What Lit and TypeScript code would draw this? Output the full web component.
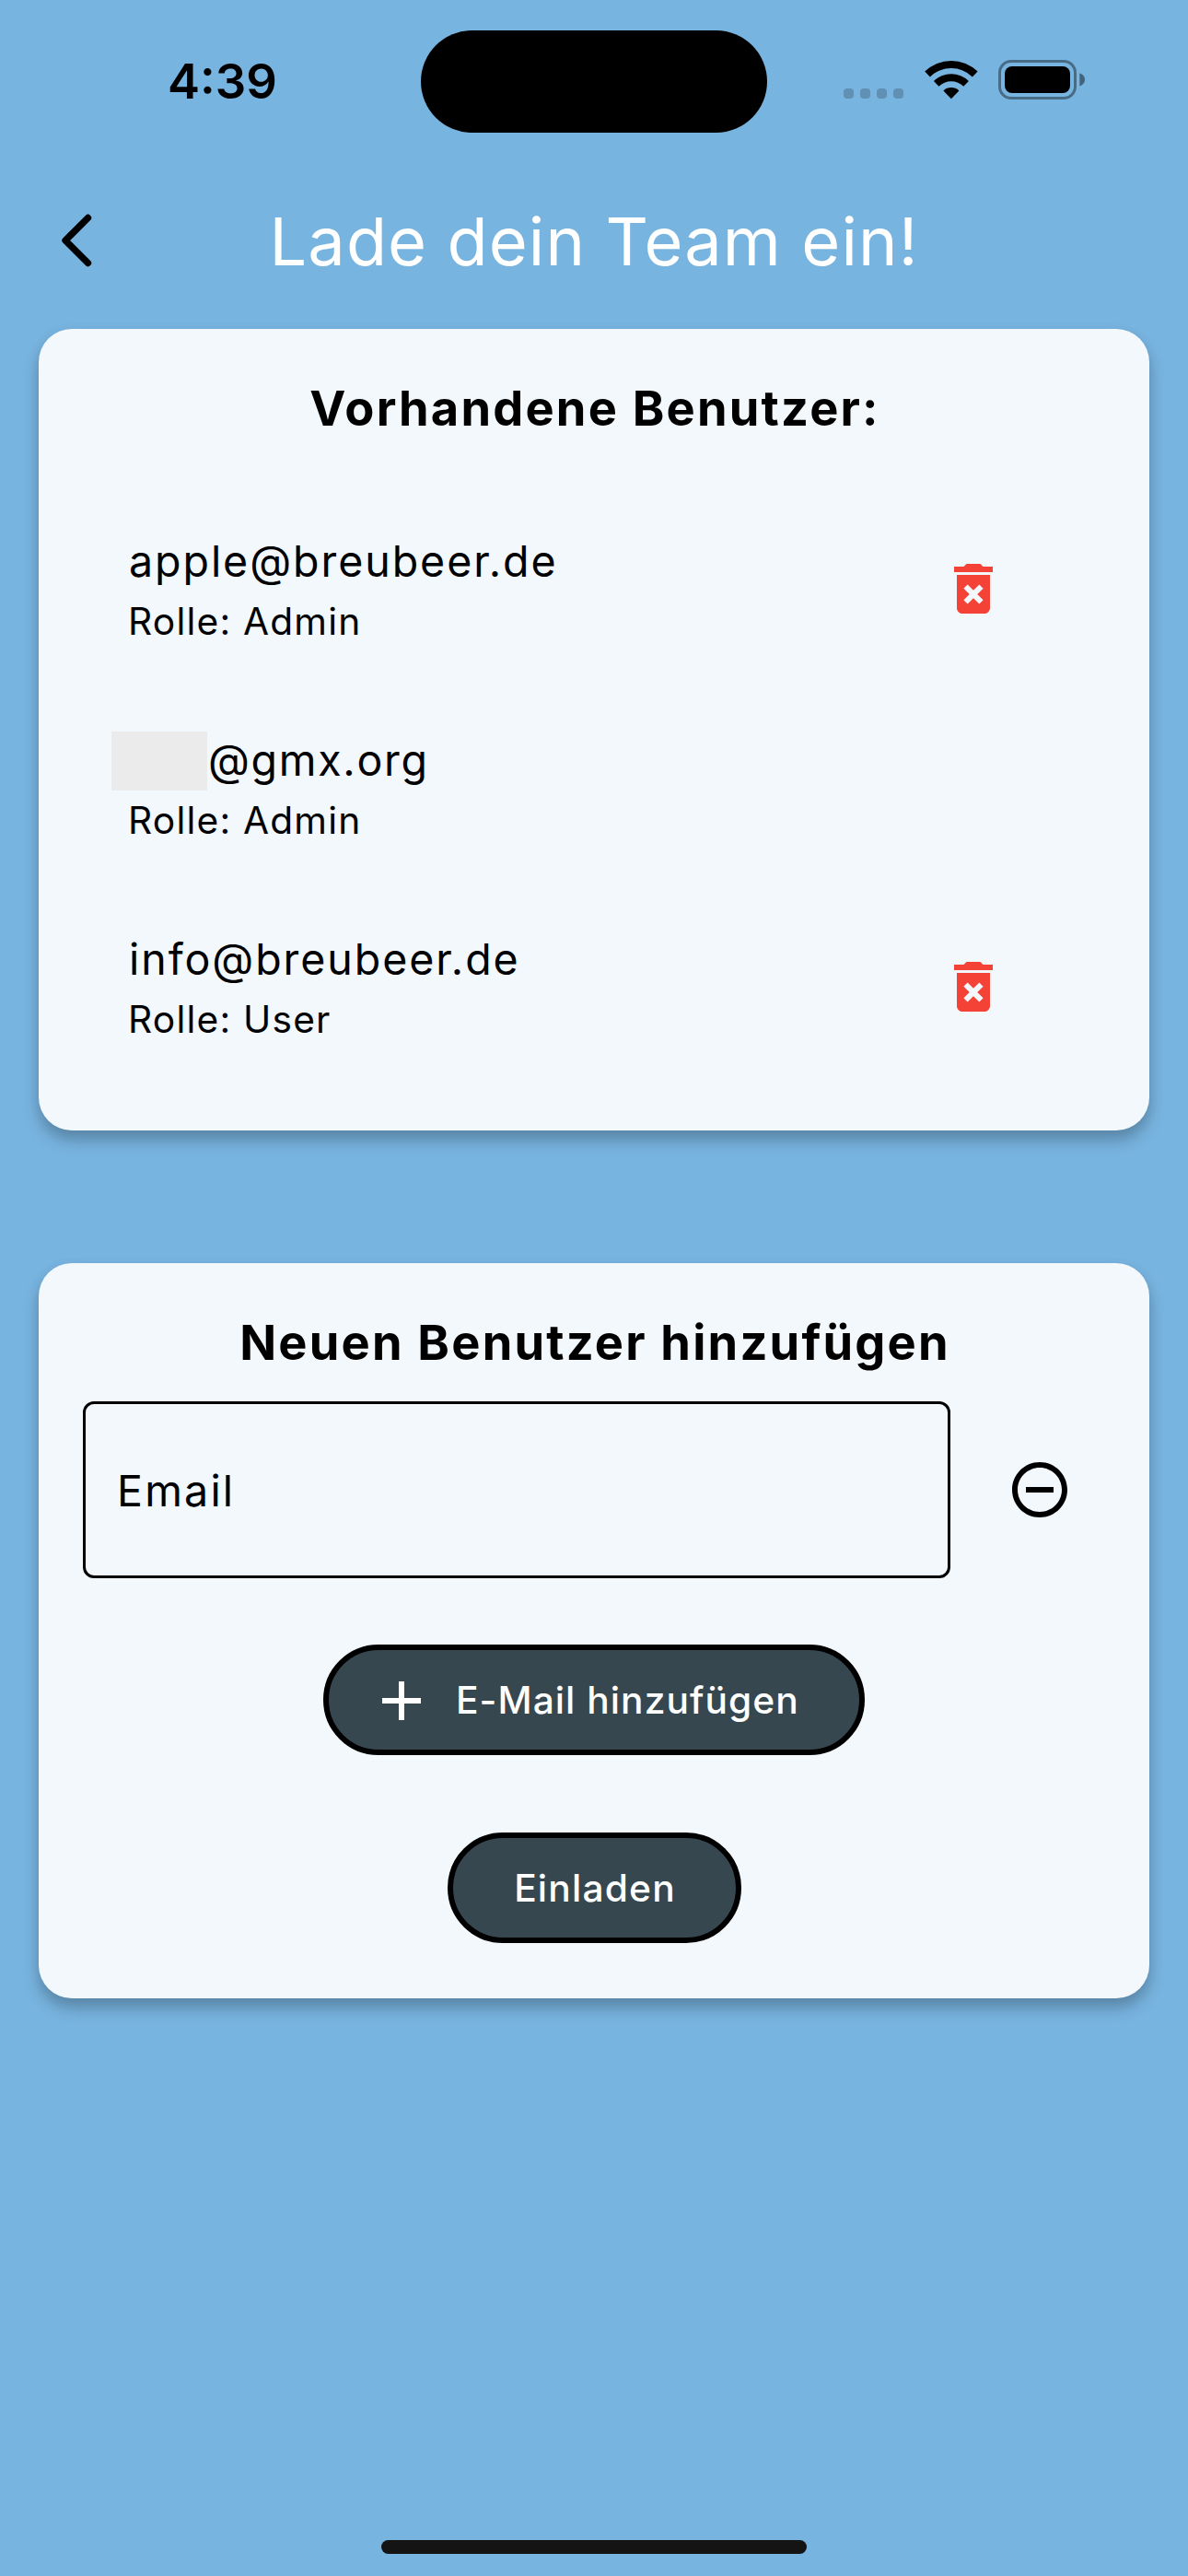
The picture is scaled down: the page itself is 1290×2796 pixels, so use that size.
import { LitElement, html, css, nothing } from "lit";
import { customElement, state } from "lit/decorators.js";

interface TeamUser {
  email: string;
  role: string;
  masked: boolean;
  removable: boolean;
}

const backIcon = html`<svg class="back" viewBox="0 0 36 60">
  <path d="M30.5 5.5 L6 30 L30.5 54.5" fill="none" stroke="#000" stroke-width="7.4" stroke-linecap="round" stroke-linejoin="round" />
</svg>`;

const wifiIcon = html`<svg class="wifi" viewBox="0 0 58 43">
  <path d="M28.9 42.2 L20.4 33.4 A12.6 12.6 0 0 1 37.4 33.4 Z" />
  <path d="M9.9 23 A27 27 0 0 1 47.9 23 L42.3 28.7 A19.2 19.2 0 0 0 15.5 28.7 Z" />
  <path d="M0.2 12.6 A41 41 0 0 1 57.6 12.6 L51.9 18.4 A33 33 0 0 0 5.9 18.4 Z" />
</svg>`;

const batteryIcon = html`<svg class="battery" viewBox="0 0 95 43">
  <rect x="1.5" y="1.5" width="82" height="40" rx="12.5" fill="none" stroke="#000" stroke-opacity=".4" stroke-width="3" />
  <rect x="7" y="7" width="71" height="29" rx="8" />
  <path d="M88.3 14.6 C91.8 15.6 94 18.4 94 21.5 C94 24.6 91.8 27.4 88.3 28.4 Z" fill-opacity=".45" />
</svg>`;

const trashIcon = html`<svg class="icon danger" viewBox="0 0 24 24">
  <path d="M6 19c0 1.1.9 2 2 2h8c1.1 0 2-.9 2-2V7H6v12zm2.46-7.12l1.41-1.41L12 12.59l2.12-2.12 1.41 1.41L13.41 14l2.12 2.12-1.41 1.41L12 15.41l-2.12 2.12-1.41-1.41L10.59 14l-2.13-2.12zM15.5 4l-1-1h-5l-1 1H5v2h14V4z" />
</svg>`;

const minusIcon = html`<svg class="icon" viewBox="0 0 24 24">
  <path d="M7 11v2h10v-2H7zm5-9C6.48 2 2 6.48 2 12s4.48 10 10 10 10-4.48 10-10S17.52 2 12 2zm0 18c-4.41 0-8-3.59-8-8s3.59-8 8-8 8 3.59 8 8-3.59 8-8 8z" />
</svg>`;

const plusIcon = html`<svg class="icon light" viewBox="0 0 24 24">
  <path d="M19 13h-6v6h-2v-6H5v-2h6V5h2v6h6v2z" />
</svg>`;

@customElement("app-root")
export class AppRoot extends LitElement {
  @state() private users: TeamUser[] = [
    { email: "apple@breubeer.de", role: "Admin", masked: false, removable: true },
    { email: "@gmx.org", role: "Admin", masked: true, removable: false },
    { email: "info@breubeer.de", role: "User", masked: false, removable: true },
  ];

  static styles = css`
    :host {
      display: block;
      font-family: Inter, "Liberation Sans", sans-serif;
      color: #000;
    }
    * {
      box-sizing: border-box;
    }
    svg {
      display: block;
      flex: none;
    }
    .screen {
      display: flex;
      flex-direction: column;
      width: 1290px;
      height: 2796px;
      background: #78b4e0;
      overflow: hidden;
    }
    .status {
      display: grid;
      grid-template-columns: 457px 376px 1fr;
      height: 178px;
      flex: none;
    }
    .time {
      padding: 56px 0 0 182px;
      font-size: 52.6px;
      font-weight: 600;
      line-height: 64px;
    }
    .island {
      height: 111px;
      margin-top: 33.4px;
      border-radius: 56px;
      background: #000;
    }
    .indicators {
      display: flex;
      align-items: flex-end;
      height: 108px;
      padding-left: 83px;
    }
    .dots {
      display: flex;
      gap: 7px;
      margin: 0 23px 1px 0;
    }
    .dot {
      width: 11px;
      height: 11px;
      border-radius: 4px;
      background: rgba(0, 0, 0, 0.2);
    }
    .wifi {
      width: 58px;
      height: 43px;
      margin-right: 22px;
    }
    .battery {
      width: 95px;
      height: 43px;
    }
    .header {
      display: grid;
      grid-template-columns: 110px 1fr 110px;
      align-items: center;
      height: 168px;
      flex: none;
    }
    .back {
      width: 36px;
      height: 60px;
      margin: 0 0 2px 65px;
    }
    .title {
      margin: 0;
      text-align: center;
      color: #fff;
      font-size: 72px;
      font-weight: 400;
      line-height: 88px;
      letter-spacing: 1.12px;
    }
    .card {
      display: flex;
      flex-direction: column;
      flex: none;
      margin: 0 42px;
      padding-top: 54px;
      border-radius: 36px;
      background: #f3f8fd;
      box-shadow: 0 11px 17px rgba(0, 0, 0, 0.23), 0 3px 14px rgba(0, 0, 0, 0.05);
    }
    .members {
      margin-top: 11px;
      padding-bottom: 48px;
    }
    .invite {
      margin-top: 144px;
      padding-bottom: 60px;
    }
    .heading {
      margin: 0;
      padding-left: 2px;
      text-align: center;
      font-size: 52.4px;
      font-weight: 700;
      line-height: 64px;
      letter-spacing: 2.2px;
    }
    .list {
      display: flex;
      flex-direction: column;
      margin-top: 56px;
    }
    .row {
      display: flex;
      align-items: center;
      justify-content: space-between;
      height: 216px;
      padding: 0 155px 0 97px;
    }
    .who {
      display: flex;
      flex-direction: column;
      gap: 6px;
      padding-top: 6px;
    }
    .email {
      display: flex;
      align-items: center;
      font-size: 46.5px;
      line-height: 60px;
      padding-left: 1px;
      letter-spacing: 1.95px;
    }
    .mask {
      width: 104px;
      height: 64px;
      margin: -1px 1px -3px -19px;
      background: #ebebeb;
    }
    .mask + span {
      letter-spacing: 1.7px;
    }
    .role {
      font-size: 40.7px;
      line-height: 60px;
      letter-spacing: 1.2px;
    }
    .icon {
      width: 72px;
      height: 72px;
    }
    .danger {
      fill: #f44336;
    }
    .light {
      fill: #fff;
    }
    .entry {
      display: flex;
      align-items: center;
      gap: 61px;
      margin: 32px 0 0 48px;
    }
    .field {
      display: flex;
      align-items: center;
      width: 942px;
      height: 192px;
      padding: 2px 0 0 34px;
      border: 3px solid #000;
      border-radius: 12px;
      font-size: 46.5px;
      line-height: 60px;
      letter-spacing: 2.2px;
    }
    .actions {
      display: flex;
      flex-direction: column;
      align-items: center;
      gap: 84px;
      margin-top: 72px;
    }
    .pill {
      display: flex;
      align-items: center;
      justify-content: center;
      height: 120px;
      border: 6px solid #000;
      border-radius: 60px;
      background: #37474f;
      color: #fff;
      font: inherit;
      font-size: 40.7px;
      font-weight: 500;
      line-height: 52px;
      letter-spacing: 1.05px;
    }
    .add {
      width: 588px;
      justify-content: flex-start;
      gap: 23px;
      padding: 1px 0 0 43px;
    }
    .send {
      width: 319px;
      padding: 1px 0 0 2px;
      letter-spacing: 1.2px;
    }
    .home {
      width: 462px;
      height: 15px;
      margin: auto auto 24px;
      border-radius: 8px;
      background: #141414;
    }
  `;

  private renderUser(user: TeamUser) {
    return html`<div class="row">
      <div class="who">
        <div class="email">${user.masked ? html`<span class="mask"></span>` : nothing}<span>${user.email}</span></div>
        <div class="role">Rolle: ${user.role}</div>
      </div>
      ${user.removable ? trashIcon : nothing}
    </div>`;
  }

  render() {
    return html`<div class="screen">
      <div class="status">
        <div class="time">4:39</div>
        <div class="island"></div>
        <div class="indicators">
          <div class="dots">
            <span class="dot"></span><span class="dot"></span><span class="dot"></span><span class="dot"></span>
          </div>
          ${wifiIcon}${batteryIcon}
        </div>
      </div>
      <header class="header">
        ${backIcon}
        <h1 class="title">Lade dein Team ein!</h1>
      </header>
      <section class="card members">
        <h2 class="heading">Vorhandene Benutzer:</h2>
        <div class="list">${this.users.map((user) => this.renderUser(user))}</div>
      </section>
      <section class="card invite">
        <h2 class="heading">Neuen Benutzer hinzufügen</h2>
        <div class="entry">
          <div class="field"><span>Email</span></div>
          ${minusIcon}
        </div>
        <div class="actions">
          <button class="pill add">${plusIcon}<span>E-Mail hinzufügen</span></button>
          <button class="pill send">Einladen</button>
        </div>
      </section>
      <div class="home"></div>
    </div>`;
  }
}
